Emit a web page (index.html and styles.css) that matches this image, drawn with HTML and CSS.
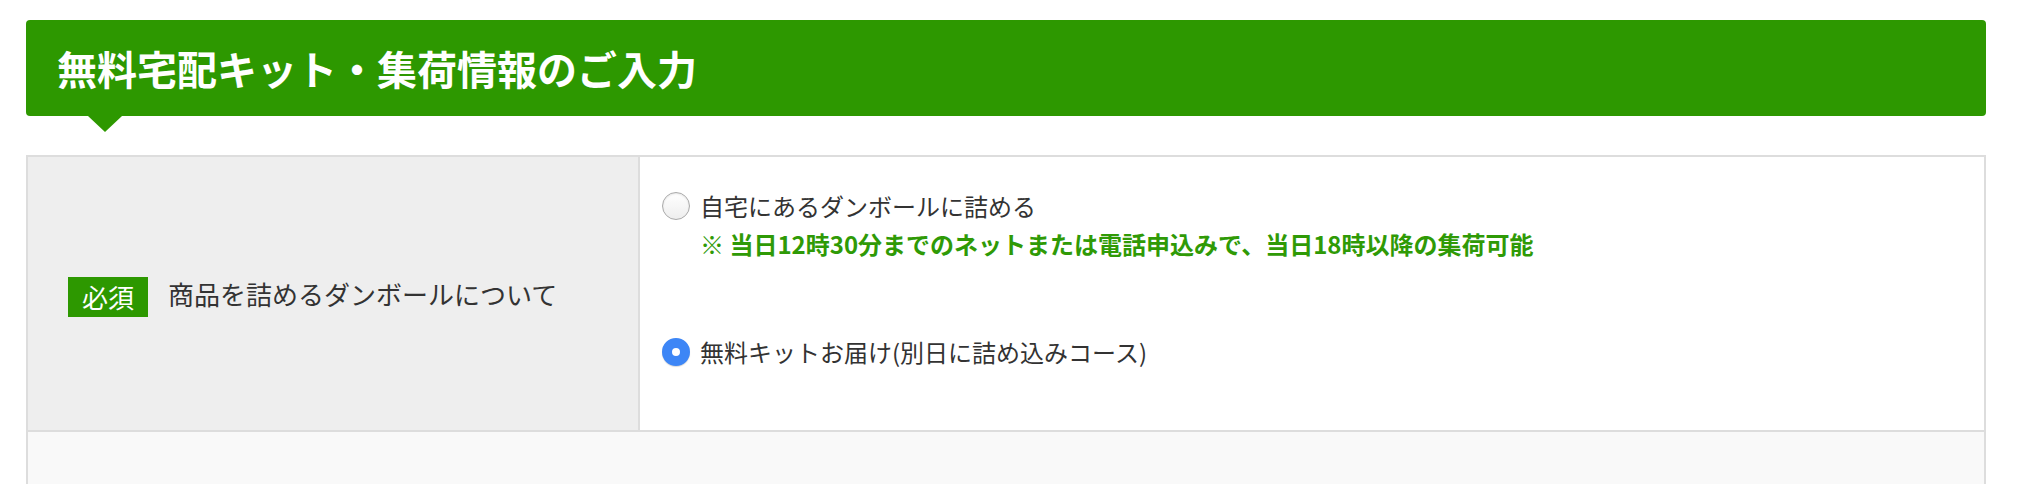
FILE: index.html
```html
<!DOCTYPE html>
<html lang="ja">
<head>
  <meta charset="utf-8">
  <title>無料宅配キット・集荷情報のご入力</title>
  <link rel="stylesheet" href="styles.css">
</head>
<body>

  <div class="page">

    <h2 class="ttl">無料宅配キット・集荷情報のご入力</h2>

    <div class="form_table">
      <div class="row">
        <div class="th">
          <span class="req">必須</span>
          <span class="th_txt">商品を詰めるダンボールについて</span>
        </div>
        <div class="td">
          <label class="opt">
            <input type="radio" name="box">
            <span>自宅にあるダンボールに詰める</span>
          </label>
          <p class="note">※ 当日12時30分までのネットまたは電話申込みで、当日18時以降の集荷可能</p>
          <label class="opt opt_kit">
            <input type="radio" name="box" checked>
            <span>無料キットお届け(別日に詰め込みコース)</span>
          </label>
        </div>
      </div>
      <div class="row next"></div>
    </div>

  </div>

</body>
</html>
```

FILE: styles.css
```css
body{
  margin: 0;
  background-color: #fff;
  color: #333;
  font-family: "Noto Sans CJK JP", "Noto Sans", sans-serif;
}

.page{
  width: 1960px;
  margin: 20px 0 0 26px;
}

/* heading with the little arrow under it */
.ttl{
  position: relative;
  display: flex;
  align-items: center;
  height: 96px;
  margin: 0;
  padding-left: 31px;
  background-color: #2d9800;
  border-radius: 4px;
  color: #fff;
  font-size: 40px;
  font-weight: bold;
}
.ttl::after{
  content: "";
  position: absolute;
  left: 62px;
  top: 100%;
  border-left: 17px solid transparent;
  border-right: 17px solid transparent;
  border-top: 16px solid #2d9800;
}

.form_table{
  margin-top: 39px;
  border: 2px solid #ddd;
  border-bottom: none;
}
.row{
  display: flex;
  height: 273px;
  border-bottom: 2px solid #ddd;
}
.row.next{
  height: 52px;
  border-bottom: none;
  background-color: #f9f9f9;
}

.th{
  box-sizing: border-box;
  width: 612px;
  display: flex;
  align-items: center;
  padding-left: 40px;
  background-color: #eee;
  border-right: 2px solid #ddd;
}
.req{
  margin-top: 7px;
  padding: 0 14px;
  line-height: 40px;
  background-color: #2d9800;
  color: #fff;
  font-size: 26px;
}
.th_txt{
  margin-left: 20px;
  font-size: 26px;
}

.td{
  flex: 1;
  padding: 30px 22px 0;
}
.opt{
  display: flex;
  align-items: center;
  gap: 10px;
  font-size: 24px;
  line-height: 38px;
  cursor: pointer;
}
.opt input{
  appearance: none;
  -webkit-appearance: none;
  box-sizing: border-box;
  width: 28px;
  height: 28px;
  margin: 0;
  border: 1px solid #aaa;
  border-radius: 50%;
  background: linear-gradient(#fff, #eee);
  box-shadow: inset 0 1px 2px rgba(0, 0, 0, 0.1);
}
.opt input:checked{
  border: 10px solid #3d86f6;
  background: #fff;
  box-shadow: 0 1px 1px rgba(0, 0, 0, 0.15);
}
.opt_kit{
  margin-top: 70px;
}
.note{
  margin: 0 0 0 38px;
  color: #2f9a06;
  font-size: 24px;
  font-weight: bold;
  line-height: 38px;
}
```
